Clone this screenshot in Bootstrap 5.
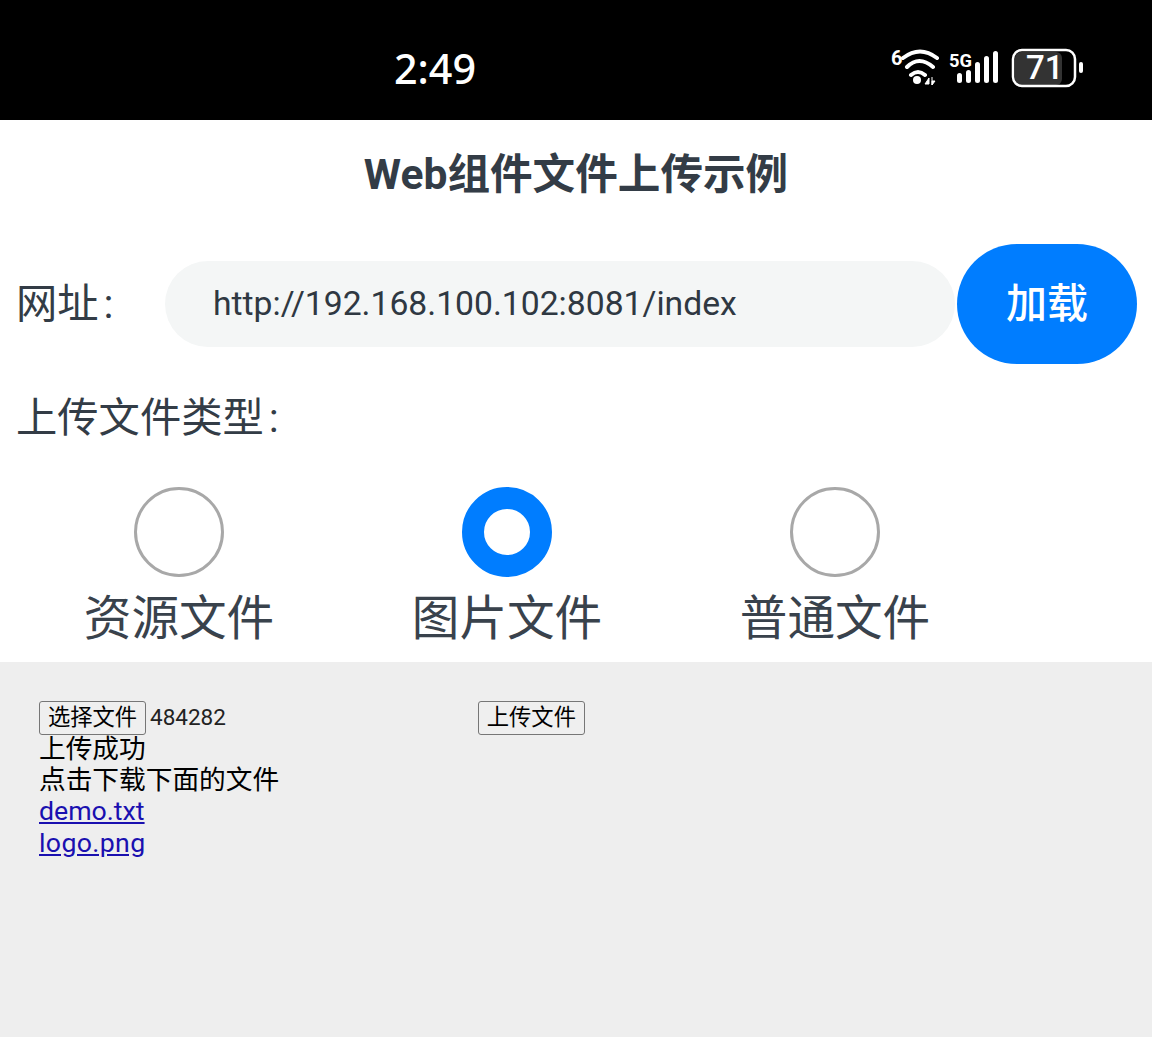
<!doctype html>
<html lang="zh"><head><meta charset="utf-8"><title>Web组件文件上传示例</title>
<link href="https://cdn.jsdelivr.net/npm/bootstrap@5.3.0/dist/css/bootstrap.min.css" rel="stylesheet">
<style>
html,body{background:#fff;height:1037px;overflow:hidden}
body{font-family:Roboto,"Noto Sans CJK SC",sans-serif;color:#333c46}
.statusbar{height:120px;background:#000;color:#fff;position:relative}
.clock{position:absolute;left:394px;top:39px;font-size:41.3px;line-height:58px;font-family:"Noto Sans",sans-serif;font-weight:500}
.stat{position:absolute;left:890px;top:46px}
.apptitle{height:124px;font-size:42.6px;line-height:108px;font-weight:700;text-align:center}
.urlrow{height:120px;padding:0 15px 0 16px}
.lbl{font-size:41.3px;line-height:60px;font-weight:400}
.colon{margin-left:5px}
.urlcell{width:149px}
.urlbox{width:790px;height:86px;border-radius:43px;background:#f4f6f6;font-size:33.7px;padding:1px 0 0 48px;color:#2f3842}
.loadbtn{width:180px;height:120px;border-radius:60px;background:#007dff;color:#fff;font-size:41px;font-weight:500;border:0;padding:2px 0 0;margin-left:2px}
.typelbl{padding:24px 0 0 16px;height:101px}
.radios{height:197px}
.ropt{width:328px;flex:none}
.ropt:first-child{margin-left:15px}
.rcirc{width:90px;height:90px;border-radius:50%;border:3px solid #a8a8a8;margin:22px auto 0;display:block}
.rcirc.sel{border:22px solid #007dff}
.rtext{font-size:47.6px;line-height:60px;text-align:center;margin-top:12px;color:#39424c}
.webarea{background:#eee;height:375px;padding:39px;color:#000;font-size:26.7px;line-height:31.2px}
.fakebtn{font-size:22.3px;line-height:27px;height:34px;width:107px;background:#efefef;border:1px solid #767676;border-radius:3px;padding:0 0 2px;color:#000;vertical-align:top}
.fname{font-size:22.5px;line-height:32px;vertical-align:top;margin-left:4px;color:#222}
.toprow{height:33px}
.up{margin-left:252px}
.webarea a{color:#1a10b0}
.pngname{letter-spacing:.35px}
</style></head><body>
<div class="statusbar">
<div class="clock">2:49</div>
<svg class="stat" width="200" height="42" viewBox="0 0 200 42" fill="none" stroke="#fff">
<path d="M13 12Q30 -1 47 12M17 21Q29 9 43 21M21 29Q28 23 35 29" stroke-width="4" stroke-linecap="round"/>
<circle cx="27" cy="34" r="4" fill="#fff" stroke="none"/>
<path d="M35 38l4-6v6zM42 31v8M42 39l3-4h-3z" fill="#fff" stroke-width="1"/>
<text x="1" y="19" font-size="20" font-family="Roboto" font-weight="700" fill="#fff" stroke="none">6</text>
<text x="59" y="21" font-size="19" font-family="Roboto" font-weight="700" fill="#fff" stroke="none" textLength="23" lengthAdjust="spacingAndGlyphs">5G</text>
<g fill="#fff" stroke="none"><rect x="67" y="27" width="5" height="10" rx="2.5"/><rect x="76" y="24" width="5" height="13" rx="2.5"/><rect x="85" y="16" width="5" height="21" rx="2.5"/><rect x="94" y="10" width="5" height="27" rx="2.5"/><rect x="103" y="5" width="5" height="32" rx="2.5"/></g>
<rect x="125" y="6" width="47" height="33" rx="6" fill="#333" stroke="none"/>
<rect x="123" y="4" width="62" height="36" rx="9" stroke-width="2.5"/>
<rect x="189" y="16" width="4" height="11" rx="2" fill="#fff" stroke="none"/>
<text x="136" y="33" font-size="33" font-family="Roboto" font-weight="500" fill="#fff" stroke="none">71</text>
</svg>
</div>
<div class="apptitle">Web组件文件上传示例</div>
<div class="urlrow d-flex align-items-center">
<div class="lbl urlcell flex-shrink-0">网址<span class="colon">:</span></div>
<div class="urlbox d-flex align-items-center flex-shrink-0">http://192.168.100.102:8081/index</div>
<button class="loadbtn flex-shrink-0">加载</button>
</div>
<div class="typelbl lbl">上传文件类型<span class="colon">:</span></div>
<div class="radios d-flex">
<div class="ropt"><span class="rcirc"></span><div class="rtext">资源文件</div></div>
<div class="ropt"><span class="rcirc sel"></span><div class="rtext">图片文件</div></div>
<div class="ropt"><span class="rcirc"></span><div class="rtext">普通文件</div></div>
</div>
<div class="webarea">
<div class="toprow"><button class="fakebtn">选择文件</button><span class="fname">484282</span><button class="fakebtn up">上传文件</button></div>
<div>上传成功</div>
<div>点击下载下面的文件</div>
<div><a href="#">demo.txt</a></div>
<div><a class="pngname" href="#">logo.png</a></div>
</div>
</body></html>
